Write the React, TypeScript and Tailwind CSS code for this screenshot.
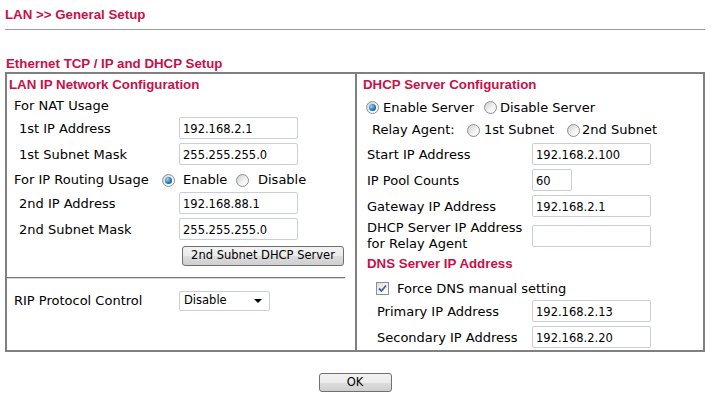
import React from 'react'

function Radio({ checked }: { checked?: boolean }) {
  return (
    <span className="inline-flex w-[13px] h-[13px] shrink-0 items-center justify-center rounded-full border border-[#8e8f8f] bg-[linear-gradient(135deg,#cfcfcf,#f4f4f4_60%,#ffffff)]">
      {checked && (
        <span className="w-[7px] h-[7px] rounded-full bg-[radial-gradient(circle_at_35%_35%,#9ad8fb,#2a7fc0_50%,#0d3f70)]" />
      )}
    </span>
  )
}

function Checkbox() {
  return (
    <span className="inline-flex w-[13px] h-[13px] shrink-0 items-center justify-center border border-[#8e8f8f] bg-[linear-gradient(135deg,#dcdcdc,#f6f6f6_60%,#ffffff)]">
      <svg width="11" height="11" viewBox="0 0 11 11">
        <path d="M2 5.5 L4.5 8 L9 2.5" fill="none" stroke="#4b5f8f" strokeWidth="1.8" />
      </svg>
    </span>
  )
}

function Field({ value = '', small }: { value?: string; small?: boolean }) {
  return (
    <input
      readOnly
      defaultValue={value}
      className={
        small
          ? 'w-[40px] h-[22px] shrink-0 rounded-[2px] border border-[#c9ced8] bg-white px-[3px] pt-[1px] text-[11.5px] text-black outline-none'
          : 'w-[119px] h-[22px] shrink-0 rounded-[2px] border border-[#c9ced8] bg-white px-[3px] pt-[1px] text-[11.5px] text-black outline-none'
      }
    />
  )
}

function Heading({ children }: { children: React.ReactNode }) {
  return (
    <span className="font-['Liberation_Sans',Arial,sans-serif] text-[13.3px] font-bold text-[#c8104a]">
      {children}
    </span>
  )
}

function LeftRow({ label, value }: { label: string; value: string }) {
  return (
    <div className="flex h-[26px] items-center">
      <span className="w-[172px] pl-[12px] pt-[1px]">{label}</span>
      <Field value={value} />
    </div>
  )
}

function RightRow({ label, value, indent, small }: { label: string; value: string; indent?: boolean; small?: boolean }) {
  return (
    <div className="flex h-[26px] items-center">
      <span className={indent ? 'w-[175px] pl-[20px] pt-[1px]' : 'w-[175px] pl-[10px] pt-[1px]'}>{label}</span>
      <Field value={value} small={small} />
    </div>
  )
}

export default function App() {
  return (
    <div className="w-[712px] h-[399px] bg-white pl-[5px] pr-[7px] font-['DejaVu_Sans',Verdana,sans-serif] text-[13px] text-black">
      <div className="flex h-[30px] items-center border-b border-[#9a9a9a]">
        <Heading>LAN &gt;&gt; General Setup</Heading>
      </div>
      <div className="mt-[26px] flex h-[16px] items-center pl-[1px]">
        <Heading>Ethernet TCP / IP and DHCP Setup</Heading>
      </div>

      <div className="flex h-[280px] w-[700px] border-2 border-[#808080]">
        {/* left column */}
        <div className="flex w-[348px] flex-col">
          <div className="flex h-[22px] items-center pl-[2px]">
            <Heading>LAN IP Network Configuration</Heading>
          </div>
          <div className="flex h-[19px] items-center pl-[7px]">For NAT Usage</div>
          <LeftRow label="1st IP Address" value="192.168.2.1" />
          <LeftRow label="1st Subnet Mask" value="255.255.255.0" />
          <div className="flex h-[23px] items-center pt-[3px]">
            <span className="w-[155px] pl-[7px]">For IP Routing Usage</span>
            <Radio checked />
            <span className="ml-[8px] w-[53px]">Enable</span>
            <Radio />
            <span className="ml-[9px]">Disable</span>
          </div>
          <LeftRow label="2nd IP Address" value="192.168.88.1" />
          <LeftRow label="2nd Subnet Mask" value="255.255.255.0" />
          <div className="mt-[3px] pl-[175px]">
            <button className="h-[20px] w-[162px] rounded-[3px] border border-[#707070] bg-[linear-gradient(#f2f2f2,#ebebeb_50%,#dddddd_50%,#cfcfcf)] text-[11.5px] text-black">
              2nd Subnet DHCP Server
            </button>
          </div>
          <div className="mt-[11px] mr-[10px] h-[2px] border-t border-[#7a7a7a] border-b border-b-[#d6d6d6]" />
          <div className="mt-[12px] flex h-[20px] items-center">
            <span className="w-[172px] pl-[7px]">RIP Protocol Control</span>
            <div className="flex h-[20px] w-[91px] items-center rounded-[2px] border border-[#c9ced8] bg-white pl-[4px] text-[11.5px]">
              <span>Disable</span>
              <svg className="ml-auto mr-[7px]" width="8" height="4" viewBox="0 0 8 4">
                <path d="M0 0 H8 L4 4 Z" fill="#000" />
              </svg>
            </div>
          </div>
        </div>

        {/* right column */}
        <div className="flex flex-1 flex-col border-l-2 border-[#808080]">
          <div className="flex h-[22px] items-center pl-[6px]">
            <Heading>DHCP Server Configuration</Heading>
          </div>
          <div className="flex h-[23px] items-center pl-[9px]">
            <Radio checked />
            <span className="ml-[4px] w-[101px]">Enable Server</span>
            <Radio />
            <span className="ml-[3px]">Disable Server</span>
          </div>
          <div className="flex h-[22px] items-center pl-[15px]">
            <span className="w-[95px]">Relay Agent:</span>
            <Radio />
            <span className="ml-[4px] w-[83px]">1st Subnet</span>
            <Radio />
            <span className="ml-[2px]">2nd Subnet</span>
          </div>
          <RightRow label="Start IP Address" value="192.168.2.100" />
          <RightRow label="IP Pool Counts" value="60" small />
          <RightRow label="Gateway IP Address" value="192.168.2.1" />
          <div className="flex h-[33px] items-center">
            <span className="w-[175px] pl-[10px] leading-[16px]">
              DHCP Server IP Address
              <br />
              for Relay Agent
            </span>
            <Field />
          </div>
          <div className="flex h-[24px] items-center pl-[10px]">
            <Heading>DNS Server IP Address</Heading>
          </div>
          <div className="flex h-[22px] items-center pl-[19px] pt-[3px]">
            <Checkbox />
            <span className="ml-[8px]">Force DNS manual setting</span>
          </div>
          <RightRow label="Primary IP Address" value="192.168.2.13" indent />
          <RightRow label="Secondary IP Address" value="192.168.2.20" indent />
        </div>
      </div>

      <div className="mt-[21px] flex w-[700px] justify-center">
        <button className="h-[19px] w-[73px] rounded-[3px] border border-[#707070] bg-[linear-gradient(#f2f2f2,#ebebeb_50%,#dddddd_50%,#cfcfcf)] text-[11.5px] text-black">
          OK
        </button>
      </div>
    </div>
  )
}
